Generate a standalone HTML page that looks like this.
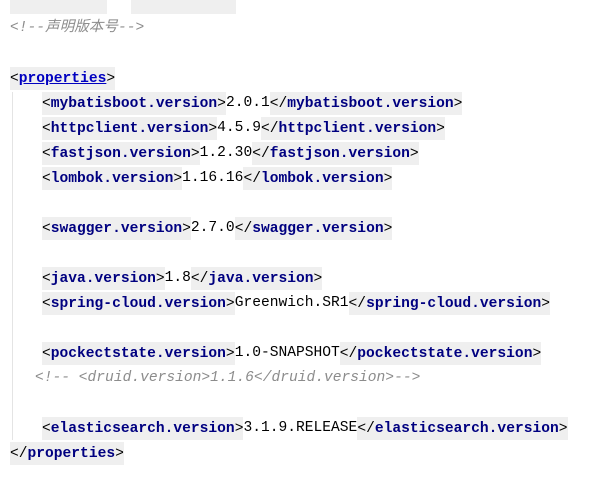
<!DOCTYPE html>
<html><head><meta charset="utf-8"><style>
body{margin:0;width:613px;height:487px;background:#fff;overflow:hidden;position:relative;font-family:"Liberation Mono","Noto Sans CJK SC",monospace;font-size:14.6px;}
.l{position:absolute;left:0;height:25px;line-height:25px;white-space:pre;color:#000;}
.t{background:#efefef;color:#000;display:inline-block;height:23px;line-height:24px;vertical-align:top;margin-top:1px;}
.t b{font-weight:bold;color:#000080;}
.c{color:#8c8c8c;font-style:italic;}
.u{text-decoration:underline;color:#0000c0;font-weight:bold;}
.bar{position:absolute;left:12px;top:92px;width:1px;height:348px;background:#e4e4e4;}
.box{position:absolute;background:#efefef;top:0;height:14px;}
</style></head><body>
<div class="box" style="left:10px;width:97px"></div>
<div class="box" style="left:131px;width:105px"></div>
<div class="bar"></div>
<div class="l c" style="top:16px;left:10px">&lt;!--声明版本号--&gt;</div>
<div class="l" style="top:66px;left:10px"><span class="t">&lt;<span class="u">properties</span>&gt;</span></div>
<div class="l" style="top:91px;left:42px"><span class="t">&lt;<b>mybatisboot.version</b>&gt;</span>2.0.1<span class="t">&lt;/<b>mybatisboot.version</b>&gt;</span></div>
<div class="l" style="top:116px;left:42px"><span class="t">&lt;<b>httpclient.version</b>&gt;</span>4.5.9<span class="t">&lt;/<b>httpclient.version</b>&gt;</span></div>
<div class="l" style="top:141px;left:42px"><span class="t">&lt;<b>fastjson.version</b>&gt;</span>1.2.30<span class="t">&lt;/<b>fastjson.version</b>&gt;</span></div>
<div class="l" style="top:166px;left:42px"><span class="t">&lt;<b>lombok.version</b>&gt;</span>1.16.16<span class="t">&lt;/<b>lombok.version</b>&gt;</span></div>
<div class="l" style="top:216px;left:42px"><span class="t">&lt;<b>swagger.version</b>&gt;</span>2.7.0<span class="t">&lt;/<b>swagger.version</b>&gt;</span></div>
<div class="l" style="top:266px;left:42px"><span class="t">&lt;<b>java.version</b>&gt;</span>1.8<span class="t">&lt;/<b>java.version</b>&gt;</span></div>
<div class="l" style="top:291px;left:42px"><span class="t">&lt;<b>spring-cloud.version</b>&gt;</span>Greenwich.SR1<span class="t">&lt;/<b>spring-cloud.version</b>&gt;</span></div>
<div class="l" style="top:341px;left:42px"><span class="t">&lt;<b>pockectstate.version</b>&gt;</span>1.0-SNAPSHOT<span class="t">&lt;/<b>pockectstate.version</b>&gt;</span></div>
<div class="l c" style="top:366px;left:35px">&lt;!-- &lt;druid.version&gt;1.1.6&lt;/druid.version&gt;--&gt;</div>
<div class="l" style="top:416px;left:42px"><span class="t">&lt;<b>elasticsearch.version</b>&gt;</span>3.1.9.RELEASE<span class="t">&lt;/<b>elasticsearch.version</b>&gt;</span></div>
<div class="l" style="top:441px;left:10px"><span class="t">&lt;/<b>properties</b>&gt;</span></div>
</body></html>
